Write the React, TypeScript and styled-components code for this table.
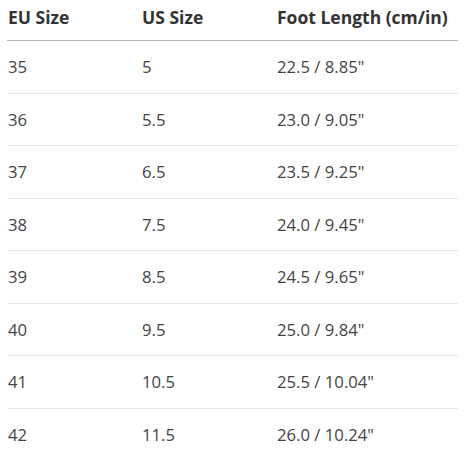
import React from "react";
import styled, { createGlobalStyle } from "styled-components";

const Global = createGlobalStyle`
  html, body { margin: 0; padding: 0; background: #ffffff; }
  body { font-family: "Open Sans", "Noto Sans", Arial, sans-serif; }
`;

const Table = styled.div`
  width: 451px;
  margin-left: 7px;
  display: flex;
  flex-direction: column;
`;

const Columns = styled.div`
  display: grid;
  grid-template-columns: 134px 135px 1fr;
  box-sizing: border-box;
`;

const HeadRow = styled(Columns)`
  height: 41px;
  padding-bottom: 7px;
  align-items: center;
  border-bottom: 1px solid #b5b5b5;
`;

const HeadCell = styled.div`
  padding-left: 1px;
  font-size: 17.5px;
  font-weight: 700;
  color: #333333;
  white-space: nowrap;
`;

const Row = styled(Columns)`
  height: 52.5px;
  align-items: center;
  border-bottom: 1px solid #e6e6e6;
`;

const Cell = styled.div`
  padding-left: 1px;
  font-size: 16.7px;
  color: #444444;
  white-space: nowrap;
`;

const rows = [
  ["35", "5", "22.5 / 8.85\""],
  ["36", "5.5", "23.0 / 9.05\""],
  ["37", "6.5", "23.5 / 9.25\""],
  ["38", "7.5", "24.0 / 9.45\""],
  ["39", "8.5", "24.5 / 9.65\""],
  ["40", "9.5", "25.0 / 9.84\""],
  ["41", "10.5", "25.5 / 10.04\""],
  ["42", "11.5", "26.0 / 10.24\""],
];

export default function App() {
  return (
    <>
      <Global />
      <Table role="table">
        <HeadRow role="row">
          <HeadCell role="columnheader">EU Size</HeadCell>
          <HeadCell role="columnheader">US Size</HeadCell>
          <HeadCell role="columnheader">Foot Length (cm/in)</HeadCell>
        </HeadRow>
        {rows.map((r) => (
          <Row role="row" key={r[0]}>
            <Cell role="cell">{r[0]}</Cell>
            <Cell role="cell">{r[1]}</Cell>
            <Cell role="cell">{r[2]}</Cell>
          </Row>
        ))}
      </Table>
    </>
  );
}
